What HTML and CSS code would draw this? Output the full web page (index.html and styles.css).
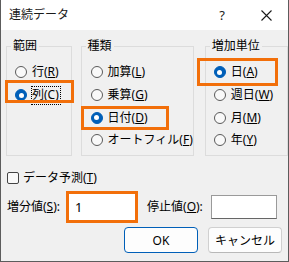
FILE: index.html
```html
<!DOCTYPE html>
<html lang="ja">
<head>
    <meta charset="UTF-8">
    <title>連続データ</title>
    <link rel="stylesheet" href="styles.css">
</head>
<body>
    <div class="window">
        <div class="titlebar">
            <span class="title">連続データ</span>
            <span class="help">?</span>
            <span class="close">
                <svg width="11" height="11" viewBox="0 0 11 11"><path d="M0.5 0.5 L10.5 10.5 M10.5 0.5 L0.5 10.5" stroke="#1a1a1a" stroke-width="1.1" fill="none"/></svg>
            </span>
        </div>
        <div class="content">
            <div class="groups">
                <fieldset class="group range">
                    <legend>範囲</legend>
                    <label class="opt"><span class="radio"></span>行(<u>R</u>)</label>
                    <label class="opt"><span class="radio on"></span><span class="focus">列(<u>C</u>)</span></label>
                </fieldset>
                <fieldset class="group kind">
                    <legend>種類</legend>
                    <label class="opt"><span class="radio"></span>加算(<u>L</u>)</label>
                    <label class="opt"><span class="radio"></span>乗算(<u>G</u>)</label>
                    <label class="opt"><span class="radio on"></span>日付(<u>D</u>)</label>
                    <label class="opt"><span class="radio"></span>オートフィル(<u>F</u>)</label>
                </fieldset>
                <fieldset class="group unit">
                    <legend>増加単位</legend>
                    <label class="opt"><span class="radio on"></span>日(<u>A</u>)</label>
                    <label class="opt"><span class="radio"></span>週日(<u>W</u>)</label>
                    <label class="opt"><span class="radio"></span>月(<u>M</u>)</label>
                    <label class="opt"><span class="radio"></span>年(<u>Y</u>)</label>
                </fieldset>
            </div>
            <label class="check"><span class="box"></span>データ予測(<u>T</u>)</label>
            <div class="values">
                <span class="lbl">増分値(<u>S</u>):</span>
                <span class="step">1</span>
                <span class="lbl stop-lbl">停止値(<u>O</u>):</span>
                <span class="stop"></span>
            </div>
            <div class="buttons">
                <button class="btn ok">OK</button>
                <button class="btn">キャンセル</button>
            </div>
        </div>
        <!-- 強調用の枠 -->
        <div class="mark mark-col"></div>
        <div class="mark mark-date"></div>
        <div class="mark mark-day"></div>
    </div>
</body>
</html>
```

FILE: styles.css
```css
* {
    margin: 0;
    padding: 0;
    box-sizing: border-box;
}

body {
    font-family: "Noto Sans", "Noto Sans CJK JP", sans-serif;
    font-size: 12px;
    color: #000;
    background: #fff;
}

.window {
    position: relative;
    width: 289px;
    height: 262px;
    background: #f0f0f0;
    border: 1px solid #5c5c5c;
    border-top: none;
}

.titlebar {
    height: 30px;
    background: #fff;
    display: flex;
    align-items: center;
    padding-left: 8px;
}

.title {
    flex: 1;
    color: #1a1a1a;
    line-height: 16px;
}

.help {
    font-size: 13px;
    width: 44px;
    text-align: center;
    color: #1a1a1a;
}

.close {
    width: 44px;
    display: flex;
    justify-content: center;
    align-items: center;
    margin-right: 0;
}

.groups {
    display: flex;
    margin-top: 8px;
    height: 118px;
}

.group {
    border: 1px solid #dcdcdc;
    padding: 7px 0 0 0;
    height: 118px;
}

.group legend {
    margin-left: 4px;
    padding: 0 2px;
    line-height: 16px;
}

.range {
    margin-left: 5px;
    width: 67px;
}

.kind {
    margin-left: 9px;
    width: 106px;
}

.unit {
    margin-left: 11px;
    width: 85px;
}

.opt {
    display: flex;
    align-items: center;
    height: 22.7px;
    padding-left: 8px;
    line-height: 16px;
    white-space: nowrap;
}

.kind .opt {
    padding-left: 9px;
}

.radio {
    width: 12px;
    height: 12px;
    border: 1px solid #5a5a5a;
    border-radius: 50%;
    background: #f9f9f9;
    margin-right: 5px;
    flex-shrink: 0;
    display: flex;
    justify-content: center;
    align-items: center;
}

.radio.on {
    background: #005fb8;
    border-color: #005fb8;
}

.radio.on::after {
    content: "";
    width: 5px;
    height: 5px;
    border-radius: 50%;
    background: #fff;
}

.focus {
    outline: 1px dotted #000;
    outline-offset: 0;
    padding: 0 1px 1px 0;
}

.check {
    display: flex;
    align-items: center;
    height: 16px;
    margin-top: 14px;
    padding-left: 6px;
    line-height: 16px;
}

.box {
    width: 12px;
    height: 12px;
    border: 1px solid #444;
    border-radius: 2px;
    background: #f9f9f9;
    margin-right: 4px;
}

.values {
    display: flex;
    align-items: center;
    margin-top: 5px;
    height: 32px;
    padding-left: 6px;
}

.lbl {
    line-height: 16px;
}

.step {
    margin-left: 6px;
    width: 72px;
    height: 32px;
    border: 3px solid #f26f0a;
    background: #fff;
    padding-left: 6px;
    display: flex;
    align-items: center;
    font-size: 13px;
}

.stop-lbl {
    margin-left: 9px;
}

.stop {
    margin-left: 8px;
    width: 66px;
    height: 24px;
    border: 1px solid #9a9a9a;
    border-bottom-color: #666;
    background: #fff;
}

.buttons {
    display: flex;
    justify-content: flex-end;
    gap: 10px;
    margin-top: 4px;
    padding-right: 6px;
}

.btn {
    width: 74px;
    height: 26px;
    font: inherit;
    background: #fdfdfd;
    border: 1px solid #d0d0d0;
    border-bottom-color: #b8b8b8;
    border-radius: 4px;
}

.btn.ok {
    border: 1.5px solid #005fb8;
}

.mark {
    position: absolute;
    border: 3px solid #f26f0a;
}

.mark-col {
    left: 4px;
    top: 80px;
    width: 69px;
    height: 23px;
}

.mark-date {
    left: 80px;
    top: 106px;
    width: 88px;
    height: 24px;
}

.mark-day {
    left: 196px;
    top: 58px;
    width: 81px;
    height: 28px;
}
```
